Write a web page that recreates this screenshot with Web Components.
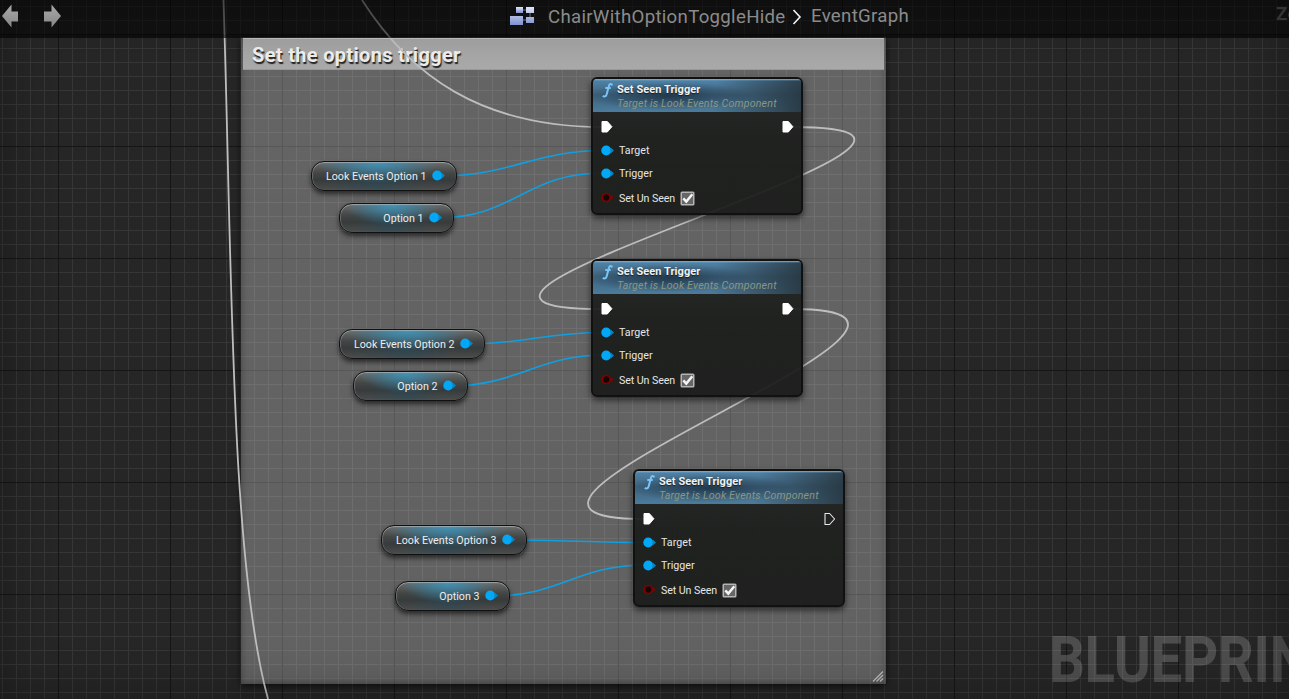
<!DOCTYPE html>
<html><head><meta charset="utf-8"><style>
html,body{margin:0;height:100%;overflow:hidden;background:#262626}
body{font-family:Roboto,"Liberation Sans",sans-serif}
</style></head><body>
<graph-editor></graph-editor>
<script>
const define=(name,html,setup)=>customElements.define(name,class extends HTMLElement{
  constructor(){super();this.attachShadow({mode:'open'})}
  connectedCallback(){this.shadowRoot.innerHTML=typeof html==='function'?html(this):html;if(setup)setup(this)}
});

define('graph-pin',el=>{
  const k=el.getAttribute('kind');
  const shapes={
    exec:'<path d="M1 1.500h5.300l4.600 5.200-4.600 5.300H1z" fill="#fff" stroke="#fff" stroke-linejoin="round"/>',
    open:'<path d="M1 1.500h4.600l5 5.500-5 5.500H1z" fill="none" stroke="#e8e8e8" stroke-width="1.1" stroke-linejoin="round"/>',
    object:'<circle cx="5.2" cy="6.500" r="4.900" fill="#00a8f7"/><path d="M9.500 3.300l3.500 3.200-3.500 3.200z" fill="#0087c6"/>',
    bool:'<circle cx="5.2" cy="6.500" r="4" fill="#170505" stroke="#830000" stroke-width="1.7"/><path d="M9.500 3.700l3.300 2.800-3.300 2.800z" fill="#830000"/>'
  };
  return `<style>:host{display:block;width:14px;height:14px;flex:none}svg{display:block}</style><svg width="14" height="14">${shapes[k]}</svg>`;
});

define('check-box',`<style>:host{display:block;width:15px;height:15px;margin-left:5px}svg{display:block}</style>
<svg width="15" height="15"><rect x=".5" y=".5" width="14" height="14" rx="1.5" fill="#b4b4b4"/><rect x="2" y="2" width="11" height="11" fill="#666"/><path d="M3.300 7.300l3 3.200 6-7.200" stroke="#f4f4f4" stroke-width="2.500" fill="none"/></svg>`);

define('function-node',el=>`<style>
:host{display:block;position:absolute;box-sizing:border-box;width:212px;height:138px;border:2px solid #101110;border-radius:6px;box-shadow:0 3px 6px #0009;background:linear-gradient(#232624ee,#1b1d1bee 45%,#1a1c1aee);overflow:hidden;color:#e6e6e6}
header{height:33px;box-sizing:border-box;display:grid;grid-template-columns:24px 1fr;padding-top:4px;
background:linear-gradient(#78b4dc 0,#6fb0dc00 2px),radial-gradient(ellipse 85px 14px at 75px 17px,#192b3ac0,#192b3a00),linear-gradient(100deg,#25323a00 58%,#25323add 100%),linear-gradient(#5284a8,#3f6580 48%,#4b7b9c)}
svg{margin:-1px 0 0 7px}
.t{font-weight:700;font-size:11px;line-height:14px;letter-spacing:.06px;color:#f1f1f1;text-shadow:0 1px 1px #0009;white-space:nowrap}
.s{font-style:italic;font-size:10.67px;line-height:14px;color:#8b9682;letter-spacing:.17px;white-space:nowrap}
.row{display:flex;align-items:center;padding:0 8px;font-size:10.67px;letter-spacing:.04px;white-space:nowrap;height:23px}
.row span{margin-left:4px}
.row.exec{height:14px;margin:8px 0 5px;justify-content:space-between;padding-right:5px}
.row.last{height:26px;letter-spacing:-.08px}
</style><header><svg width="14" height="18" viewBox="0 0 14 18"><path d="M12.2 3.300C11.4 1.300 9.500 1.700 8.900 4L6.600 12.500C6.100 14.500 4.200 15.100 2.800 13.800M5.300 6.100h5.400" fill="none" stroke="#78c4f5" stroke-width="2"/></svg><div><div class="t">Set Seen Trigger</div><div class="s">Target is Look Events Component</div></div></header>
<div class="row exec"><graph-pin kind="exec"></graph-pin><graph-pin kind="${el.getAttribute('out')}"></graph-pin></div>
<div class="row"><graph-pin kind="object"></graph-pin><span>Target</span></div>
<div class="row"><graph-pin kind="object"></graph-pin><span>Trigger</span></div>
<div class="row last"><graph-pin kind="bool"></graph-pin><span>Set Un Seen</span><check-box></check-box></div>`);

define('variable-node',`<style>
:host{display:flex;position:absolute;box-sizing:border-box;height:30px;border:1.5px solid #111;border-radius:13px;align-items:center;justify-content:flex-end;padding:0 10.5px 0 0;font-size:10.67px;letter-spacing:.02px;color:#eee;white-space:nowrap;box-shadow:inset 0 1px 1px #b8b8b8b0,inset 1px 0 1px #8888,0 3px 5px #0009;
background:radial-gradient(ellipse 42% 75% at 46% 0,#4299c0e8,#3f90b500),linear-gradient(90deg,#0000 10%,#1e4a5e66 45%,#0000 80%),linear-gradient(#6b6d6d,#434645 40%,#383b3b 65%,#4b4d4d)}
span{margin-right:5px}
</style><span><slot></slot></span><graph-pin kind="object"></graph-pin>`);

define('comment-box',`<style>
:host{display:block;position:absolute;box-sizing:border-box;padding:1px 2px 0 2px;background:linear-gradient(#ffffff49,#ffffff46);box-shadow:0 2px 7px #000a,inset 0 0 7px #0005}
h1{margin:0;height:32px;box-sizing:border-box;padding-left:9px;background:linear-gradient(#a0a0a0,#a9a9a9);border-top:1px solid #bbb;border-bottom:1px solid #999;font-size:20px;letter-spacing:.32px;line-height:32px;font-weight:700;color:#ececec;text-shadow:1px 2px 1px #222;white-space:nowrap}
svg{position:absolute;right:2px;bottom:2px}
</style><h1><slot></slot></h1><svg width="12" height="11"><path d="M1 10.500L11 .5M4.500 10.500L11 4M8 10.500L11 7.500" stroke="#bbb" stroke-width="1.3"/></svg>`);

define('graph-wires',`<style>:host{display:block;position:absolute;inset:0}svg{display:block}</style>
<svg width="1289" height="699" fill="none"><g stroke="#bdbdbd" stroke-width="1.8">
<path d="M223.500 0C232 260 230 560 268 699"/>
<path d="M362 0C410 75 480 127 603 127"/>
<path d="M792 127C1067 127 327 309 602 309"/>
<path d="M792 309C1033 309 403 519 644 519"/></g>
<g stroke="#109fe0" stroke-width="1.6">
<path d="M440 176C510 176 535 150.500 603 150.500"/><path d="M437 218C515 218 525 173 603 173"/>
<path d="M468 344C525 344 545 332.500 603 332.500"/><path d="M451 386C515 386 540 355 603 355"/>
<path d="M510 540C560 540 595 542.500 645 542.500"/><path d="M493 596C560 596 578 565 645 565"/></g></svg>`);

define('title-bar',`<style>
:host{display:flex;position:absolute;inset:0 0 auto 0;height:38px;box-sizing:border-box;background:linear-gradient(#0000008c 35px,#000000a0 35px);align-items:flex-start;color:#8b8b8b;font-size:18.67px;letter-spacing:.29px;line-height:34px;white-space:nowrap;overflow:hidden}
:host>*{flex:none}
.nav{width:510px;display:flex}.nav svg{margin-top:3px}
.ico{margin:6px 13px 0 0}.p{width:237px}.sep{margin:8px 9px 0 7px}.ev{width:99px;line-height:32px}
.zoom{margin-left:366px;font-weight:700;color:#343434;line-height:28px}
</style><div class="nav"><svg width="64" height="26"><defs><linearGradient id="g" x2="0" y2="1"><stop stop-color="#aaa"/><stop offset="1" stop-color="#858585"/></linearGradient></defs><path d="M2 15.500L11.500 4V11H18V21H11.500V27zM61 15.500L51.500 4V11H44V21H51.500V27z" transform="translate(0 -2.500)" fill="url(#g)"/></svg></div>
<svg class="ico" width="25" height="21"><defs><linearGradient id="b" x2="0" y2="1"><stop stop-color="#e0e6fb"/><stop offset="1" stop-color="#7f90cf"/></linearGradient></defs><path d="M9 4h10M20 6v9M10 14h9" stroke="#777"/><path d="M6 1h7v6H6z" fill="url(#b)"/><path d="M16 1h8v6h-8zM0 10h13v9H0zM16 11h8v6h-8z" fill="url(#b)"/></svg>
<span class="p">ChairWithOptionToggleHide</span><svg class="sep" width="10" height="18"><path d="M1.500 2l6.500 7-6.500 7" fill="none" stroke="#f4f4f4" stroke-width="1.6"/></svg><span class="ev">EventGraph</span><span class="zoom">Zoom 1:1</span>`);

define('graph-editor',`<style>
:host{display:block;position:relative;width:1289px;height:699px;overflow:hidden;
background:
linear-gradient(90deg,#161616 1px,#0000 1px) 58px 0/112px 112px,
linear-gradient(#161616 1px,#0000 1px) 0 34px/112px 112px,
linear-gradient(90deg,#363636 1px,#0000 1px) 2px 0/14px 14px,
linear-gradient(#363636 1px,#0000 1px) 0 6px/14px 14px,#262626}
.shade{position:absolute;inset:0;box-shadow:inset 0 0 50px #0005;pointer-events:none}
.mark{position:absolute;left:1049px;top:624px;font-size:64px;letter-spacing:-.4px;line-height:74px;font-weight:700;color:#ffffff2e;white-space:nowrap;transform:scaleX(.88);transform-origin:0 0}
</style>
<comment-box style="left:241px;top:37px;width:645px;height:647px">Set the options trigger</comment-box>
<graph-wires></graph-wires>
<function-node out="exec" style="left:591px;top:77px"></function-node>
<function-node out="exec" style="left:591px;top:259px"></function-node>
<function-node out="open" style="left:633px;top:469px"></function-node>
<variable-node style="left:311px;top:161px;width:146px">Look Events Option 1</variable-node>
<variable-node style="left:339px;top:203px;width:115px">Option 1</variable-node>
<variable-node style="left:339px;top:329px;width:146px">Look Events Option 2</variable-node>
<variable-node style="left:353px;top:371px;width:115px">Option 2</variable-node>
<variable-node style="left:381px;top:525px;width:146px">Look Events Option 3</variable-node>
<variable-node style="left:395px;top:581px;width:115px">Option 3</variable-node>
<div class="mark">BLUEPRINT</div><div class="shade"></div><title-bar></title-bar>`);
</script></body></html>
